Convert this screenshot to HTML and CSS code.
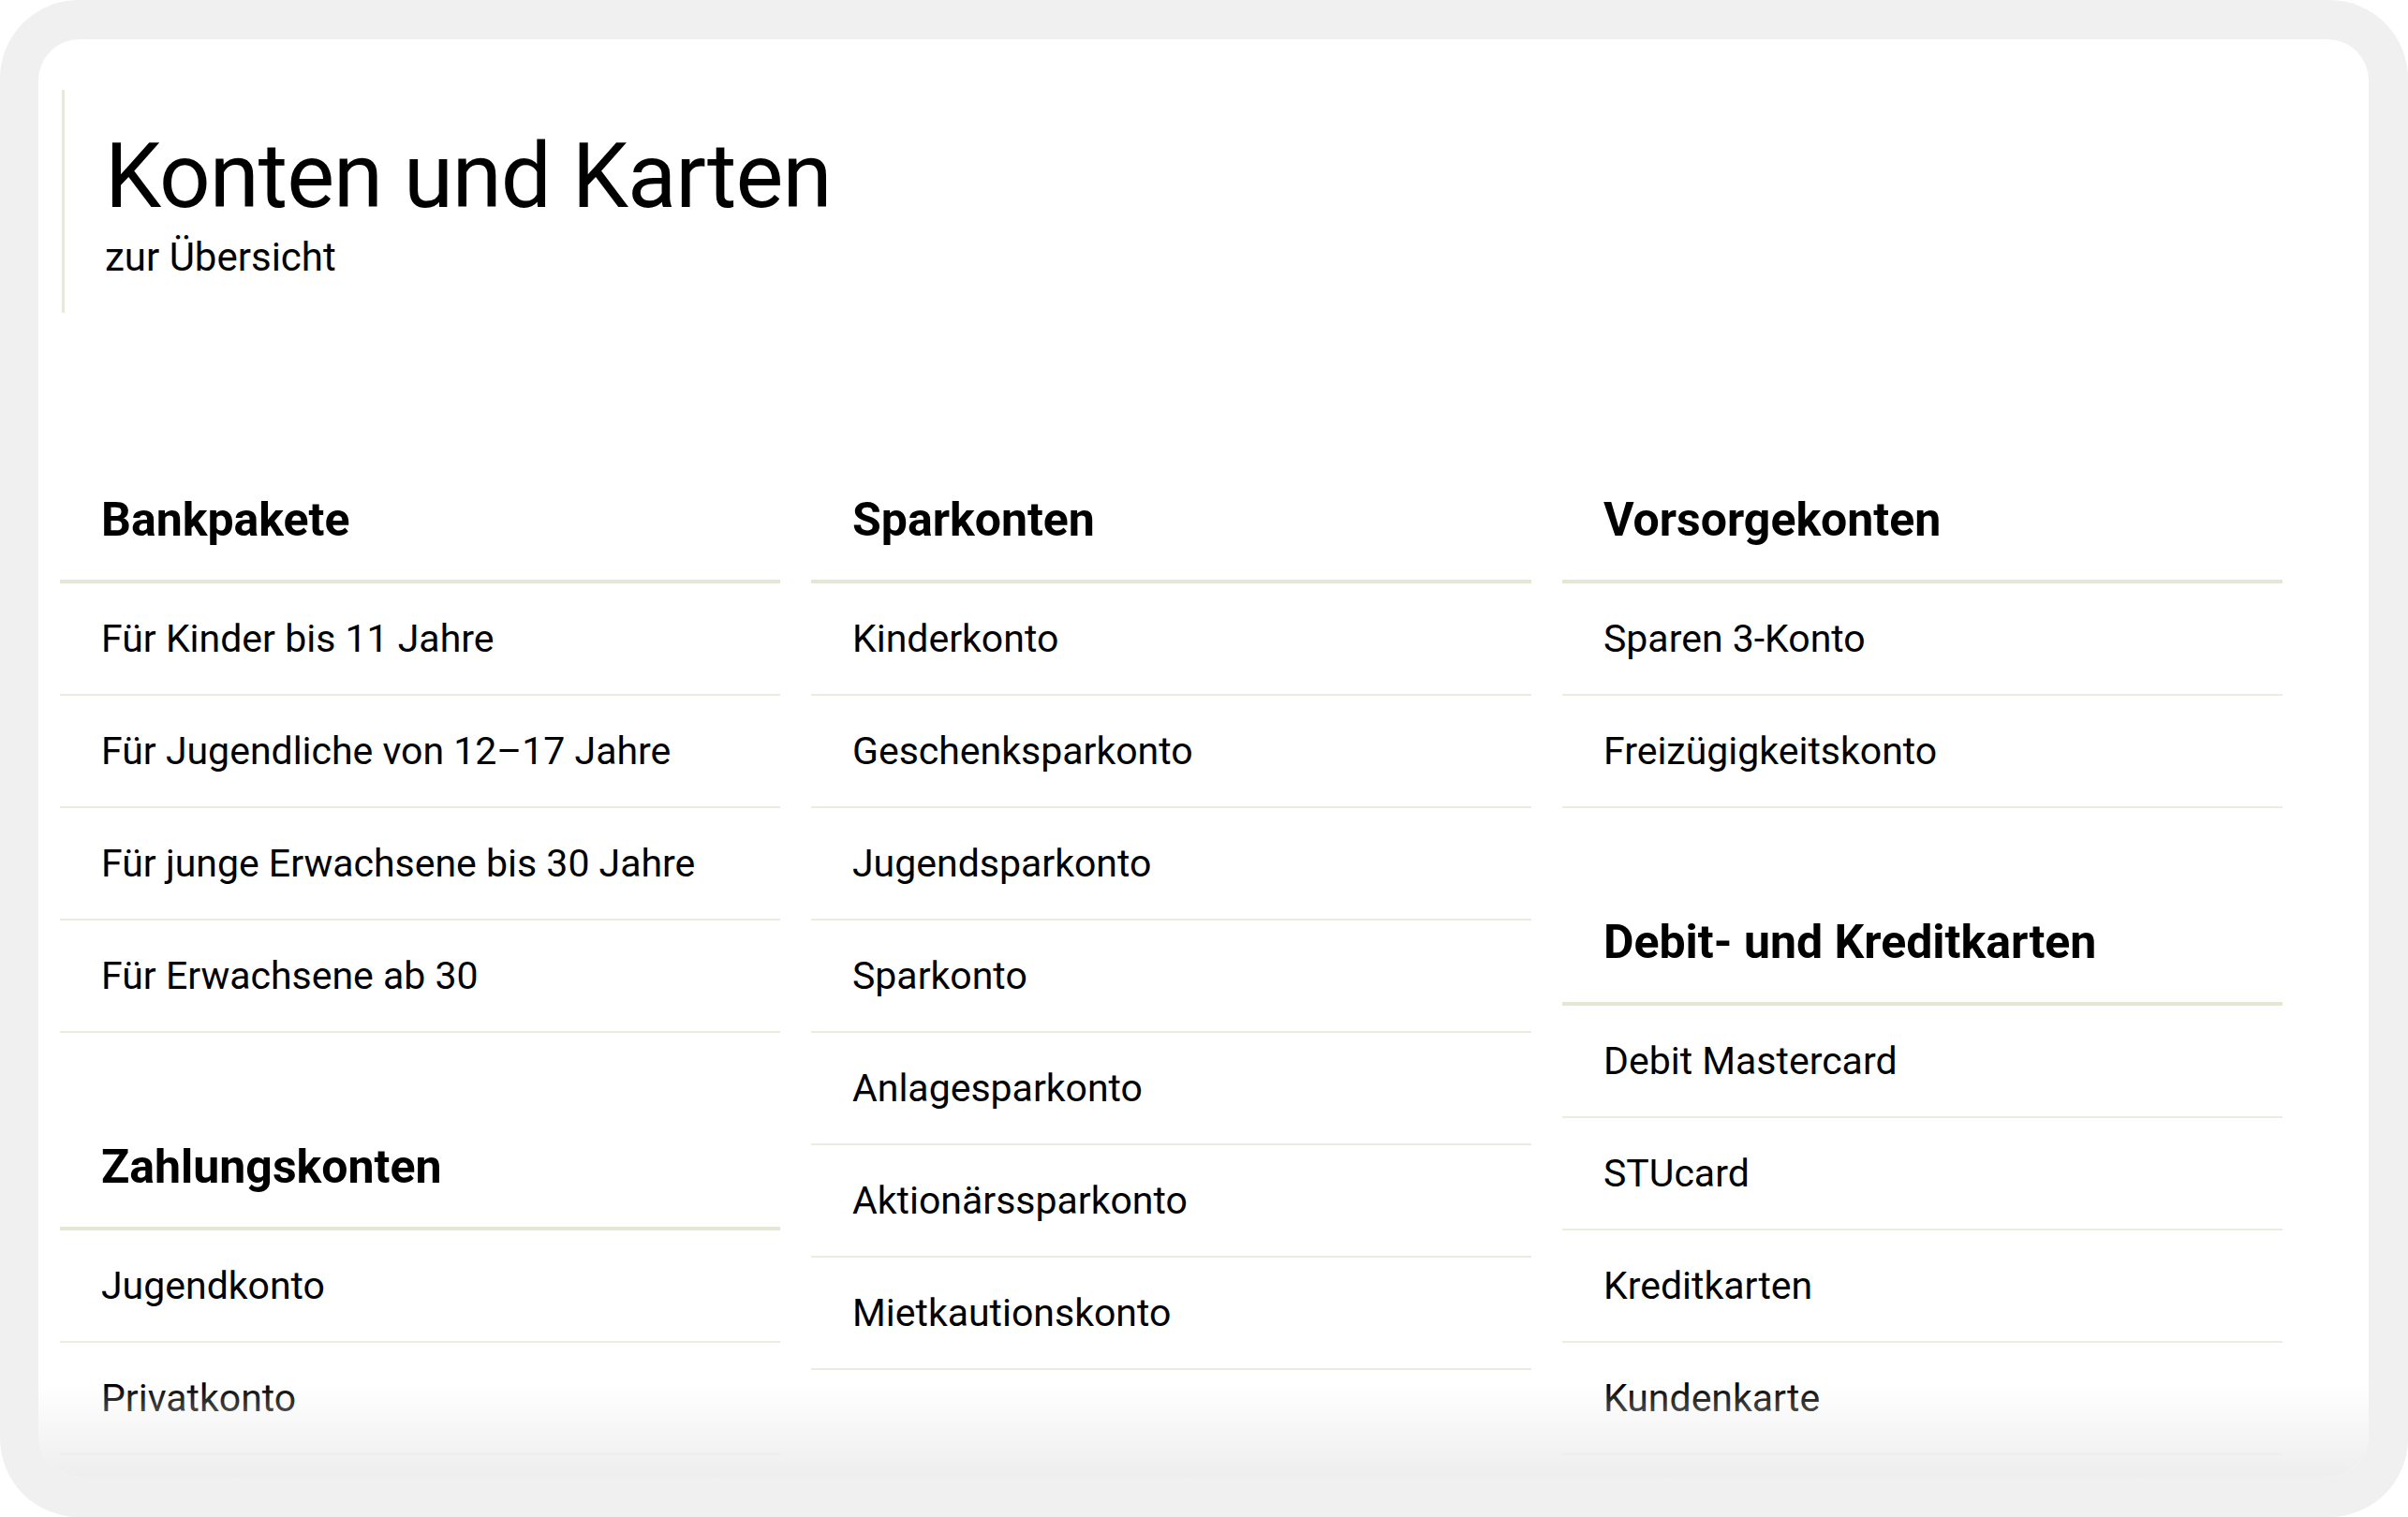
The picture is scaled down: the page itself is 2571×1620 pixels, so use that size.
FILE: index.html
```html
<!DOCTYPE html>
<html lang="de">
<head>
<meta charset="utf-8">
<title>Konten und Karten</title>
<link rel="stylesheet" href="styles.css">
</head>
<body>
<div class="frame">
  <main class="card">
    <header class="intro">
      <h1 class="intro-title">Konten und Karten</h1>
      <p class="intro-sub">zur Übersicht</p>
    </header>
    <div class="columns">
      <div class="col">
        <section class="group">
          <h2 class="group-title">Bankpakete</h2>
          <ul class="group-list">
            <li class="group-item">Für Kinder bis 11 Jahre</li>
            <li class="group-item">Für Jugendliche von 12–17 Jahre</li>
            <li class="group-item">Für junge Erwachsene bis 30 Jahre</li>
            <li class="group-item">Für Erwachsene ab 30</li>
          </ul>
        </section>
        <section class="group">
          <h2 class="group-title">Zahlungskonten</h2>
          <ul class="group-list">
            <li class="group-item">Jugendkonto</li>
            <li class="group-item">Privatkonto</li>
          </ul>
        </section>
      </div>
      <div class="col">
        <section class="group">
          <h2 class="group-title">Sparkonten</h2>
          <ul class="group-list">
            <li class="group-item">Kinderkonto</li>
            <li class="group-item">Geschenksparkonto</li>
            <li class="group-item">Jugendsparkonto</li>
            <li class="group-item">Sparkonto</li>
            <li class="group-item">Anlagesparkonto</li>
            <li class="group-item">Aktionärssparkonto</li>
            <li class="group-item">Mietkautionskonto</li>
          </ul>
        </section>
      </div>
      <div class="col">
        <section class="group">
          <h2 class="group-title">Vorsorgekonten</h2>
          <ul class="group-list">
            <li class="group-item">Sparen 3-Konto</li>
            <li class="group-item">Freizügigkeitskonto</li>
          </ul>
        </section>
        <section class="group">
          <h2 class="group-title">Debit- und Kreditkarten</h2>
          <ul class="group-list">
            <li class="group-item">Debit Mastercard</li>
            <li class="group-item">STUcard</li>
            <li class="group-item">Kreditkarten</li>
            <li class="group-item">Kundenkarte</li>
          </ul>
        </section>
      </div>
    </div>
    <div class="fade"></div>
  </main>
</div>
</body>
</html>
```

FILE: styles.css
```css
html, body {
  margin: 0;
  padding: 0;
  background: #ffffff;
}

body {
  font-family: Roboto, "Liberation Sans", sans-serif;
  color: #000000;
}

.frame {
  width: 2571px;
  height: 1620px;
  box-sizing: border-box;
  padding: 42px 42px 43px 41px;
  background: #f0f0f0;
  border-radius: 84px;
}

.card {
  position: relative;
  height: 100%;
  box-sizing: border-box;
  padding: 54px 92px 0 23px;
  background: #ffffff;
  border-radius: 44px;
  overflow: hidden;
}

.intro {
  margin-left: 2px;
  padding: 37px 0 36px 43px;
  border-left: 3px solid #e6eadb;
}

.intro-title {
  margin: 0;
  font-size: 96px;
  font-weight: 400;
  line-height: 110px;
  letter-spacing: -1px;
}

.intro-sub {
  margin: 9px 0 0;
  font-size: 42px;
  line-height: 46px;
}

.columns {
  display: grid;
  grid-template-columns: repeat(3, 769px);
  column-gap: 33px;
  align-items: start;
  margin-top: 193px;
}

.group + .group {
  margin-top: 115px;
}

.group-title {
  margin: 0;
  padding: 0 0 36px 44px;
  font-size: 50px;
  font-weight: 700;
  line-height: 56px;
  border-bottom: 4px solid #e3e8d4;
}

.group-list {
  list-style: none;
  margin: 0;
  padding: 0;
}

.group-item {
  display: flex;
  align-items: center;
  height: 118px;
  padding-left: 44px;
  font-size: 41px;
  border-bottom: 2px solid #ecede2;
}

.fade {
  position: absolute;
  left: 0;
  right: 0;
  bottom: 0;
  height: 100px;
  background: linear-gradient(rgba(240, 240, 240, 0), #eeeeee);
  pointer-events: none;
}
```
